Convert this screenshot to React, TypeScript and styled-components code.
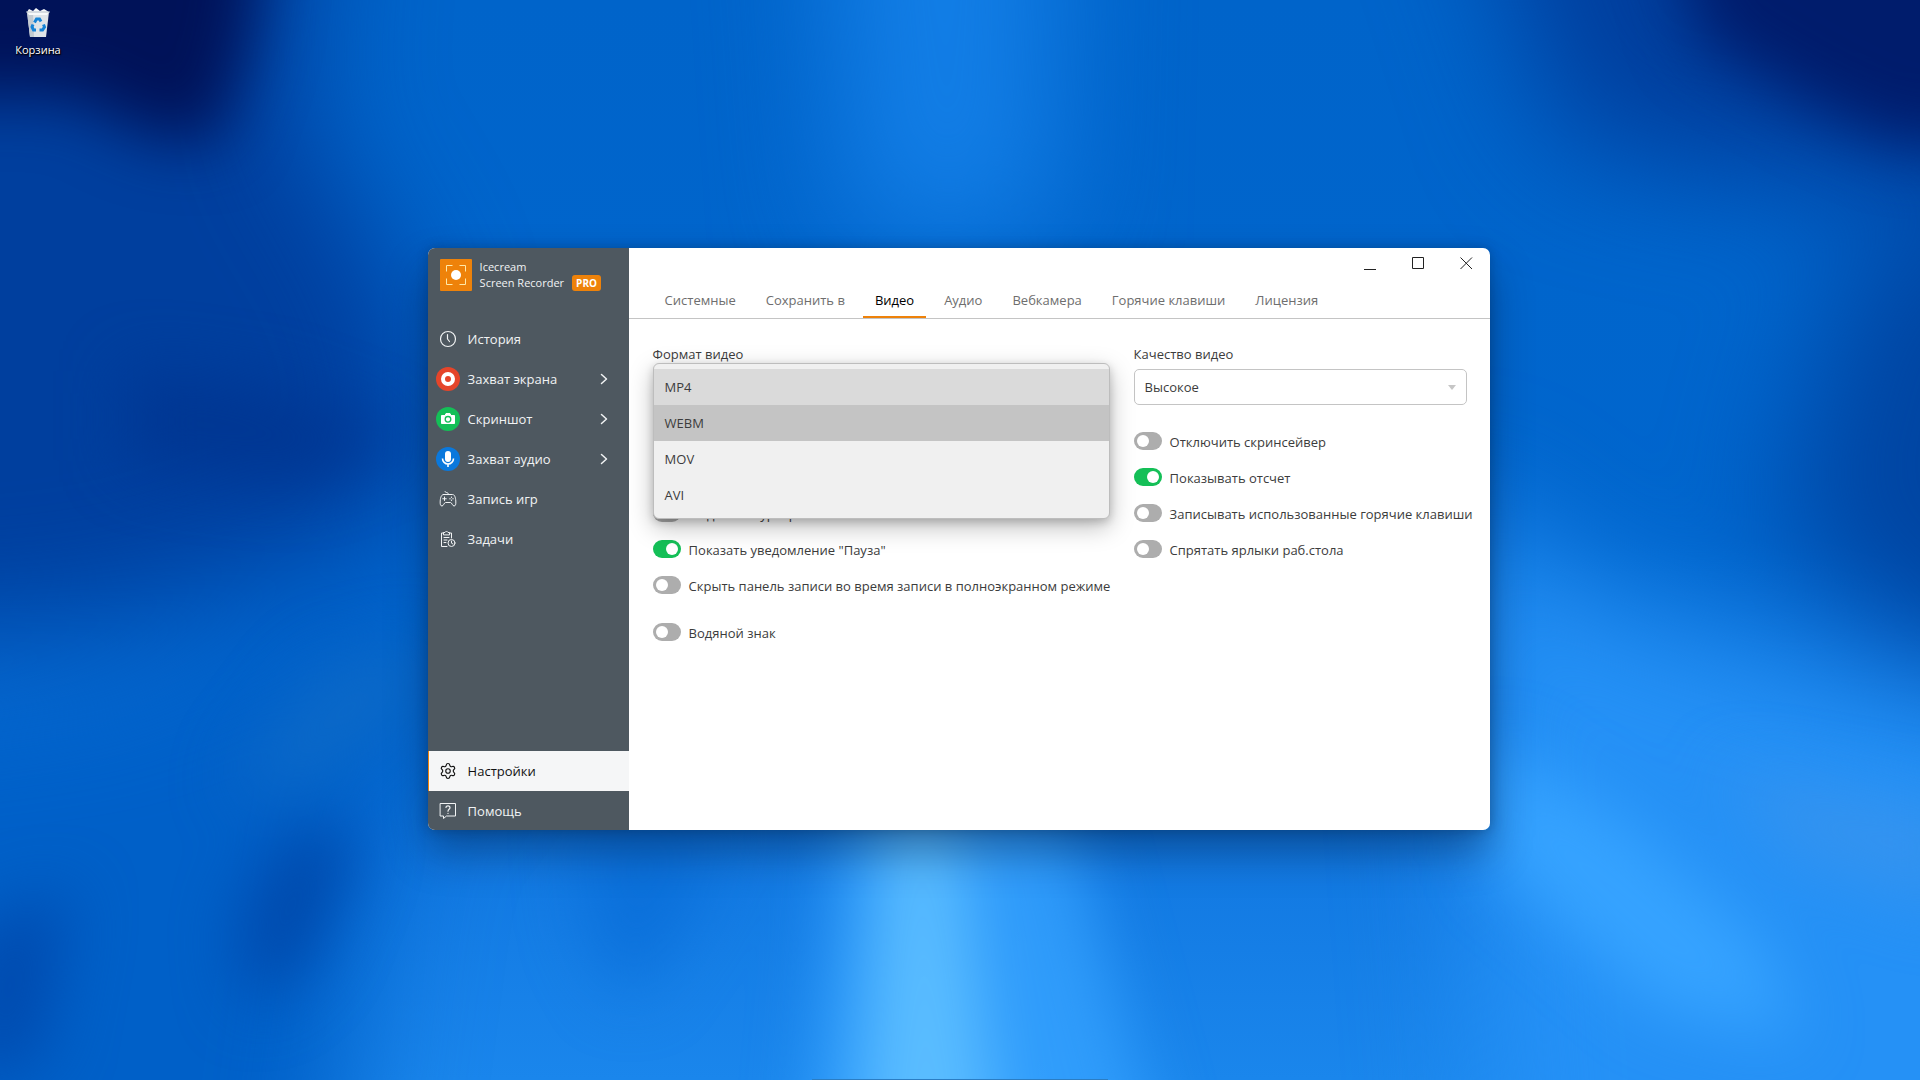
import React, { useState } from "react";
import styled, { createGlobalStyle, css } from "styled-components";
import { Settings } from "lucide-react";

const color = {
  sidebar: "#4e5860",
  orange: "#ee820a",
  green: "#14bf57",
  line: "#c4c4c4",
  text: "#3c3c3c",
};

const GlobalStyle = createGlobalStyle`
  *, *::before, *::after { box-sizing: border-box; }
  body {
    margin: 0;
    font-family: "Open Sans", "Noto Sans", sans-serif;
    font-size: 13px;
    line-height: 20px;
    color: ${color.text};
    background: #0068d0;
  }
  button, select, input { font: inherit; color: inherit; margin: 0; }
  button { border: 0; padding: 0; background: none; cursor: pointer; }
`;

/* ---------- desktop ---------- */

const Desktop = styled.div`
  position: relative;
  min-height: 100vh;
  display: grid;
  grid-template-rows: 1fr 2px;
  overflow: hidden;
`;

const WallpaperSvg = styled.svg`
  position: absolute;
  inset: 0;
  width: 100%;
  height: 100%;
`;

const Stage = styled.main`
  position: relative;
  display: grid;
  place-items: center;
  padding-right: 2px;
`;

const TaskbarEdge = styled.footer`
  position: relative;
  width: 296px;
  justify-self: center;
  border-bottom: 1px solid #2a7dc4;
`;

const Shortcut = styled.button`
  position: absolute;
  z-index: 1;
  top: 7px;
  left: 0;
  width: 76px;
  display: flex;
  flex-direction: column;
  align-items: center;
  gap: 2px;
  font-size: 11px;
  line-height: 18px;
  color: #fff;
  text-shadow: 0 1px 2px #000, 1px 1px 1px #000;
`;

/* ---------- window ---------- */

const Window = styled.section`
  width: min(1062px, 100%);
  min-height: 582px;
  display: grid;
  grid-template-columns: 201px minmax(0, 1fr);
  border-radius: 7px;
  overflow: hidden;
  background: #fff;
`;

const WindowShadow = styled.div`
  border-radius: 7px;
  box-shadow: 0 22px 42px rgba(0, 25, 60, 0.42), 0 0 12px rgba(0, 30, 60, 0.3);
`;

const Sidebar = styled.aside`
  display: flex;
  flex-direction: column;
  background: ${color.sidebar};
  color: #f1f3f4;
`;

const Brand = styled.header`
  display: flex;
  gap: 8px;
  height: 71px;
  padding: 11px 12px 0;
`;

const BrandName = styled.h1`
  margin: 0;
  font-size: 11px;
  font-weight: 400;
  line-height: 16px;
  white-space: nowrap;
`;

const BrandLine = styled.span`
  display: flex;
  align-items: center;
  gap: 8px;
`;

const ProBadge = styled.span`
  padding: 0 4px;
  border-radius: 3px;
  background: ${color.orange};
  color: #fff;
  font-size: 10px;
  font-weight: 700;
  line-height: 16px;
`;

const Menu = styled.nav`
  display: flex;
  flex-direction: column;
  &:last-child { margin-top: auto; }
`;

const MenuItem = styled.button<{ $active?: boolean }>`
  display: flex;
  align-items: center;
  gap: 8px;
  height: 40px;
  padding: 0 21px 0 8px;
  text-align: left;
  ${({ $active }) =>
    $active &&
    css`
      background: #f5f6f7;
      color: #111;
      box-shadow: inset 1px 0 0 ${color.orange};
    `}
  &:last-child { margin-bottom: -1px; }
`;

const MenuLabel = styled.span`
  flex: 1;
  white-space: nowrap;
`;

const IconSlot = styled.span`
  width: 24px;
  height: 24px;
  display: grid;
  place-items: center;
`;

const Content = styled.div`
  display: flex;
  flex-direction: column;
  min-width: 0;
`;

const TitleBar = styled.div`
  display: flex;
  justify-content: flex-end;
  height: 30px;
`;

const WindowButton = styled.button`
  width: 48px;
  padding-left: 2px;
  display: grid;
  place-items: center;
`;

const Tabs = styled.div`
  display: flex;
  gap: 6px;
  padding: 0 24px;
  border-bottom: 1px solid ${color.line};
`;

const Tab = styled.button<{ $active: boolean }>`
  height: 40px;
  padding: 6px 12px 0;
  border-bottom: 2px solid ${({ $active }) => ($active ? color.orange : "transparent")};
  color: ${({ $active }) => ($active ? "#000" : "#6e6e6e")};
  white-space: nowrap;
`;

const Form = styled.form`
  display: grid;
  grid-template-columns: minmax(0, 1fr) 333px;
  gap: 24px;
  padding: 25px 23px 24px 24px;
`;

const Field = styled.div`
  position: relative;
  display: flex;
  flex-direction: column;
  gap: 5px;
`;

const SelectWrap = styled.div`
  display: grid;
  align-items: center;
  > * { grid-area: 1 / 1; }
  > svg { justify-self: end; margin-right: 11px; pointer-events: none; }
`;

const Select = styled.select`
  appearance: none;
  height: 36px;
  padding: 0 28px 0 10px;
  border: 1px solid ${color.line};
  border-radius: 5px;
  background: #fff;
`;

const Popup = styled.ul`
  position: absolute;
  z-index: 2;
  top: 19px;
  left: 0;
  right: 0;
  margin: 0;
  padding: 5px 0;
  list-style: none;
  border: 1px solid #bdbdbd;
  border-radius: 6px;
  background: #f0f0f0;
  box-shadow: 0 8px 24px rgba(0, 0, 0, 0.26), 0 3px 8px rgba(0, 0, 0, 0.18);
`;

const Option = styled.li<{ $tone?: "selected" | "hover" }>`
  height: 36px;
  padding: 0 11px;
  line-height: 36px;
  background: ${({ $tone }) =>
    $tone === "selected" ? "#dadada" : $tone === "hover" ? "#c4c4c4" : "transparent"};
`;

const ToggleList = styled.div<{ $offset: number }>`
  display: flex;
  flex-direction: column;
  gap: 16px;
  margin-top: ${({ $offset }) => $offset}px;
`;

const ToggleRow = styled.label<{ $spaced?: boolean }>`
  display: flex;
  align-items: center;
  gap: 8px;
  height: 20px;
  margin-top: ${({ $spaced }) => ($spaced ? 11 : 0)}px;
  white-space: nowrap;
  cursor: pointer;
`;

const ToggleText = styled.span`
  padding-top: 2px;
`;

const Switch = styled.input`
  appearance: none;
  flex: none;
  width: 28px;
  height: 18px;
  padding: 3px;
  border-radius: 9px;
  background: #adadad;
  display: flex;
  cursor: pointer;
  &::before {
    content: "";
    width: 12px;
    height: 12px;
    border-radius: 50%;
    background: #fff;
  }
  &:checked {
    background: ${color.green};
    justify-content: flex-end;
  }
`;

/* ---------- drawings ---------- */

const Wallpaper = () => (
  <WallpaperSvg viewBox="0 0 1920 1080" preserveAspectRatio="none" aria-hidden="true">
    <defs>
      <linearGradient id="sky" x1="0" y1="0" x2="0" y2="1">
        <stop offset="0" stopColor="#0064ca" />
        <stop offset="0.5" stopColor="#0066ce" />
        <stop offset="0.8" stopColor="#1279e2" />
        <stop offset="1" stopColor="#1a86ec" />
      </linearGradient>
      <filter id="soft" x="-60%" y="-60%" width="220%" height="220%" colorInterpolationFilters="sRGB">
        <feGaussianBlur stdDeviation="32" />
      </filter>
      <filter id="wide" x="-60%" y="-60%" width="220%" height="220%" colorInterpolationFilters="sRGB">
        <feGaussianBlur stdDeviation="60" />
      </filter>
    </defs>
    <rect width="1920" height="1080" fill="url(#sky)" />
    <g filter="url(#wide)">
      <path d="M-200 -200 L330 -200 L300 120 L400 290 L440 480 L300 560 L100 620 L-200 640Z" fill="#003f9e" />
      <path d="M-200 720 L120 680 L420 540 L470 700 L380 820 L320 1280 L-200 1280Z" fill="#0060c8" />
      <path d="M820 -200 L1060 -200 L1050 240 L850 240Z" fill="#127ee6" />
      <path d="M1450 -200 L2120 -200 L2120 200 L1750 180 L1560 140Z" fill="#003f9e" />
      <path d="M1860 240 L2120 200 L2120 680 L1900 640 L1780 520Z" fill="#0045a2" />
      <path d="M1440 480 L1600 600 L2120 760 L2120 1280 L1500 1280Z" fill="#2591f6" />
    </g>
    <g filter="url(#soft)">
      <path d="M-200 -200 L280 -200 L250 40 L215 145 L150 135 L70 95 L-200 95Z" fill="#001258" />
      <path d="M1640 -200 L2120 -200 L2120 140 L1900 145 L1820 110 L1700 40Z" fill="#001c6c" />
      <path d="M130 370 L270 390 L400 440 L300 480 L130 460Z" fill="#003692" />
      <path d="M420 640 L320 670 L230 790 L300 790 L430 700Z" fill="#0b69c8" />
      <path d="M360 830 L290 830 L240 920 L250 1010 L310 960Z" fill="#0048aa" />
      <path d="M70 890 L-30 930 L-40 1080 L40 1060Z" fill="#004aae" />
      <path d="M1490 740 L1620 820 L1760 940 L1800 1040 L1660 1010 L1490 860Z" fill="#36a3ff" />
      <path d="M1720 770 L1960 810 L1960 910 L1800 860Z" fill="#3493ef" />
      <path d="M840 780 L1060 780 L1180 1240 L800 1240Z" fill="#36a2ff" fillOpacity="0.8" />
      <path d="M890 780 L950 780 L1010 1240 L850 1240Z" fill="#5bbdff" />
      <path d="M580 800 L720 800 L700 900 L630 1000 L590 930Z" fill="#0b70da" />
    </g>
  </WallpaperSvg>
);

const RecycleBin = () => (
  <svg width="26" height="32" viewBox="0 0 26 32" aria-hidden="true">
    <path d="M2 5 L24 5 L21 30 L5 30Z" fill="#dfe4e8" />
    <path d="M2 5 L8 5 L9 30 L5 30Z" fill="#c2cad1" />
    <path d="M2 5 L4 2 L8 4 L11 1 L15 4 L19 2 L24 5 L22 8 L4 8Z" fill="#f7f9fa" />
    <path d="M1 5 H25" stroke="#b3bdc6" strokeWidth="1" />
    <g fill="none" stroke="#1583d6" strokeWidth="3">
      <path d="M9.500 15.500 L11.500 12 H14.500 L16 14.500" />
      <path d="M18.500 17.500 L19.500 20 L17.500 23 H14.500" />
      <path d="M11 23 H8.500 L7 20 L8 17.500" />
    </g>
  </svg>
);

const Logo = () => (
  <svg width="32" height="32" viewBox="0 0 32 32" aria-hidden="true">
    <rect width="32" height="32" rx="1" fill={color.orange} />
    <path
      d="M6.500 12.500V6.500H12.500M19.500 6.500H25.500V12.500M25.500 19.500V25.500H19.500M12.500 25.500H6.500V19.500"
      fill="none"
      stroke="#ffe9a8"
    />
    <circle cx="16" cy="16" r="5" fill="#fff" />
  </svg>
);

const line = { fill: "none", stroke: "currentColor", strokeLinecap: "round", strokeLinejoin: "round" } as const;

const HistoryIcon = () => (
  <svg width="18" height="18" viewBox="0 0 18 18" {...line} strokeWidth="1.2">
    <circle cx="9" cy="9" r="7.500" />
    <path d="M8.500 4.500V9L10.500 11.500" />
  </svg>
);

const RecordIcon = () => (
  <svg width="24" height="24" viewBox="0 0 24 24">
    <circle cx="12" cy="12" r="12" fill="#e5452a" />
    <circle cx="12" cy="12" r="5" fill="none" stroke="#fff" strokeWidth="4" />
  </svg>
);

const CameraIcon = () => (
  <svg width="24" height="24" viewBox="0 0 24 24">
    <circle cx="12" cy="12" r="12" fill={color.green} />
    <path d="M5.500 8.500h3.500l1-2h4l1 2h3.500V16.500H5.500Z" fill="#fff" stroke="#fff" strokeLinejoin="round" />
    <circle cx="12" cy="12.300" r="2.800" fill="none" stroke={color.green} strokeWidth="1.300" />
  </svg>
);

const MicIcon = () => (
  <svg width="24" height="24" viewBox="0 0 24 24">
    <circle cx="12" cy="12" r="12" fill="#0a78dc" />
    <rect x="9" y="4" width="6" height="11" rx="3" fill="#fff" />
    <path d="M6.500 11.500a5.500 5.500 0 0 0 11 0M12 17V20" fill="none" stroke="#fff" strokeWidth="1.600" />
  </svg>
);

const GamepadIcon = () => (
  <svg width="18" height="18" viewBox="0 0 18 18" {...line}>
    <path d="M6 1.500C6.500 3.500 9.500 1.500 9.500 4.500" />
    <path d="M4.500 4.500H13.500C15.500 4.500 16.500 7 16.800 11C17 14.500 16.500 16 15 16C13.500 16 12.800 12.500 11.500 12.500H6.500C5.200 12.500 4.500 16 3 16C1.500 16 1 14.500 1.200 11C1.500 7 2.500 4.500 4.500 4.500Z" />
    <path d="M5.500 7V10.500M3.750 8.750H7.250" />
    <path d="M12.500 7.200V7.300M12.500 10.200V10.300M11 8.700V8.800M14 8.700V8.800" strokeWidth="1.300" />
  </svg>
);

const TasksIcon = () => (
  <svg width="18" height="18" viewBox="0 0 18 18" {...line}>
    <path d="M8 16.500H2.500V3H4.500M10.500 3H12.500V8" />
    <path d="M4.500 4.500V2.500H6L7.500 1L9 2.500H10.500V4.500Z" />
    <path d="M5 7.500H10M5 10H8M5 12.500H7" />
    <circle cx="12.500" cy="13" r="3.500" />
    <path d="M12.500 11V13.200L14 14" />
  </svg>
);

const HelpIcon = () => (
  <svg width="18" height="18" viewBox="0 0 18 18" {...line}>
    <path d="M1.500 1.500H16.500V14H7.500L4.500 16.500V14H1.500Z" />
    <path d="M7 5.500C7 3.200 11 3.200 11 5.700C11 7.300 9 7.300 9 9.200M9 11.300V11.400" strokeWidth="1.200" />
  </svg>
);

const Chevron = () => (
  <svg width="8" height="12" viewBox="0 0 8 12" {...line} strokeWidth="1.500">
    <path d="M1.500 1.500L6.500 6L1.500 10.500" />
  </svg>
);

const CaretDown = () => (
  <svg width="8" height="5" viewBox="0 0 8 5">
    <path d="M0 0H8L4 5Z" fill="#c6c6c6" />
  </svg>
);

const windowGlyphs = [
  { label: "Свернуть", d: "M0 12.500H12" },
  { label: "Развернуть", d: "M0.500 0.500H11.500V11.500H0.500Z" },
  { label: "Закрыть", d: "M0.500 0.500L12 12M12 0.500L0.500 12" },
];

/* ---------- data ---------- */

const mainMenu = [
  { label: "История", icon: <HistoryIcon /> },
  { label: "Захват экрана", icon: <RecordIcon />, nested: true },
  { label: "Скриншот", icon: <CameraIcon />, nested: true },
  { label: "Захват аудио", icon: <MicIcon />, nested: true },
  { label: "Запись игр", icon: <GamepadIcon /> },
  { label: "Задачи", icon: <TasksIcon /> },
];

const tabs = ["Системные", "Сохранить в", "Видео", "Аудио", "Вебкамера", "Горячие клавиши", "Лицензия"];
const formats = ["MP4", "WEBM", "MOV", "AVI"];

const leftToggles = [
  { label: "Выделять курсор", on: false },
  { label: 'Показать уведомление "Пауза"', on: true },
  { label: "Скрыть панель записи во время записи в полноэкранном режиме", on: false },
  { label: "Водяной знак", on: false, spaced: true },
];

const rightToggles = [
  { label: "Отключить скринсейвер", on: false },
  { label: "Показывать отсчет", on: true },
  { label: "Записывать использованные горячие клавиши", on: false },
  { label: "Спрятать ярлыки раб.стола", on: false },
];

type ToggleItem = { label: string; on: boolean; spaced?: boolean };

const Toggles = ({ items, offset }: { items: ToggleItem[]; offset: number }) => (
  <ToggleList $offset={offset}>
    {items.map((item) => (
      <ToggleRow key={item.label} $spaced={item.spaced}>
        <Switch type="checkbox" role="switch" defaultChecked={item.on} />
        <ToggleText>{item.label}</ToggleText>
      </ToggleRow>
    ))}
  </ToggleList>
);

export default function App() {
  const [tab, setTab] = useState("Видео");
  const [format, setFormat] = useState("MP4");
  const [hovered, setHovered] = useState("WEBM");

  return (
    <Desktop>
      <GlobalStyle />
      <Wallpaper />
      <Shortcut type="button">
        <RecycleBin />
        Корзина
      </Shortcut>
      <Stage>
        <WindowShadow>
          <Window>
            <Sidebar>
              <Brand>
                <Logo />
                <BrandName>
                  <BrandLine>Icecream</BrandLine>
                  <BrandLine>
                    Screen Recorder <ProBadge>PRO</ProBadge>
                  </BrandLine>
                </BrandName>
              </Brand>
              <Menu>
                {mainMenu.map(({ label, icon, nested }) => (
                  <MenuItem key={label} type="button">
                    <IconSlot>{icon}</IconSlot>
                    <MenuLabel>{label}</MenuLabel>
                    {nested && <Chevron />}
                  </MenuItem>
                ))}
              </Menu>
              <Menu>
                <MenuItem type="button" $active>
                  <IconSlot>
                    <Settings size={18} strokeWidth={1.5} />
                  </IconSlot>
                  <MenuLabel>Настройки</MenuLabel>
                </MenuItem>
                <MenuItem type="button">
                  <IconSlot>
                    <HelpIcon />
                  </IconSlot>
                  <MenuLabel>Помощь</MenuLabel>
                </MenuItem>
              </Menu>
            </Sidebar>

            <Content>
              <TitleBar>
                {windowGlyphs.map(({ label, d }) => (
                  <WindowButton key={label} type="button" aria-label={label}>
                    <svg width="13" height="13" viewBox="0 0 13 13">
                      <path d={d} fill="none" stroke="#222" />
                    </svg>
                  </WindowButton>
                ))}
              </TitleBar>
              <Tabs role="tablist">
                {tabs.map((name) => (
                  <Tab
                    key={name}
                    type="button"
                    role="tab"
                    aria-selected={name === tab}
                    $active={name === tab}
                    onClick={() => setTab(name)}
                  >
                    {name}
                  </Tab>
                ))}
              </Tabs>
              <Form>
                <div>
                  <Field>
                    <label htmlFor="format">Формат видео</label>
                    <Select id="format" value={format} onChange={(e) => setFormat(e.target.value)}>
                      {formats.map((name) => (
                        <option key={name}>{name}</option>
                      ))}
                    </Select>
                    <Popup role="listbox" aria-label="Формат видео">
                      {formats.map((name) => (
                        <Option
                          key={name}
                          role="option"
                          aria-selected={name === format}
                          $tone={name === hovered ? "hover" : name === format ? "selected" : undefined}
                          onMouseEnter={() => setHovered(name)}
                          onClick={() => setFormat(name)}
                        >
                          {name}
                        </Option>
                      ))}
                    </Popup>
                  </Field>
                  <Toggles items={leftToggles} offset={98} />
                </div>
                <div>
                  <Field>
                    <label htmlFor="quality">Качество видео</label>
                    <SelectWrap>
                      <Select id="quality" defaultValue="Высокое">
                        <option>Высокое</option>
                      </Select>
                      <CaretDown />
                    </SelectWrap>
                  </Field>
                  <Toggles items={rightToggles} offset={26} />
                </div>
              </Form>
            </Content>
          </Window>
        </WindowShadow>
      </Stage>
      <TaskbarEdge />
    </Desktop>
  );
}
